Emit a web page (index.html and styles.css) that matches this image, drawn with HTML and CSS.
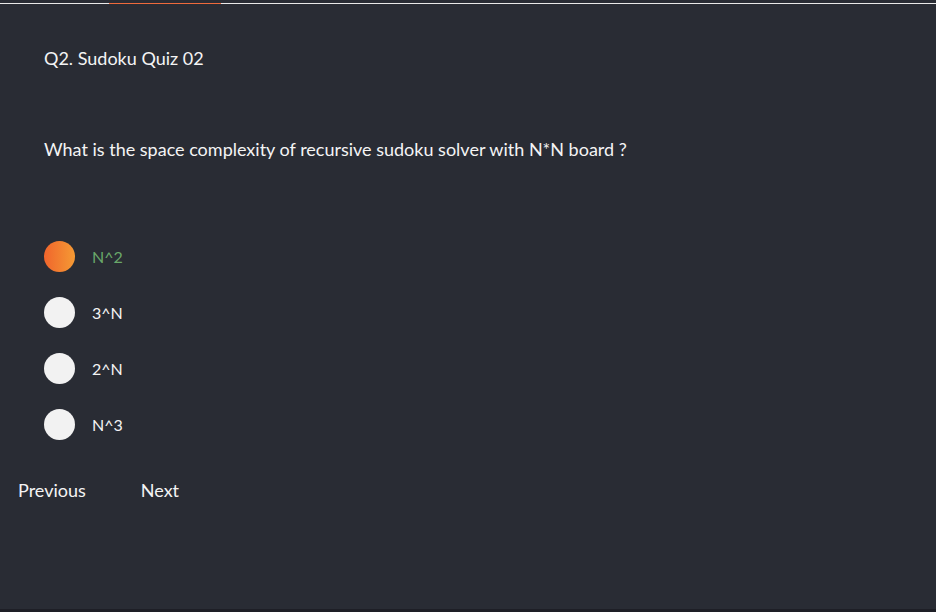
FILE: index.html
```html
<!DOCTYPE html>
<html>
<head>
<meta charset="utf-8">
<link rel="stylesheet" href="styles.css">
</head>
<body>
<div class="page">
  <div class="progress">
    <span class="seg seg-done"></span>
    <span class="seg seg-current"></span>
    <span class="seg seg-rest"></span>
  </div>
  <div class="quiz">
    <h2 class="title">Q2. Sudoku Quiz 02</h2>
    <p class="question">What is the space complexity of recursive sudoku solver with N*N board ?</p>
    <ul class="options">
      <li class="option selected"><span class="radio"></span><span class="label">N^2</span></li>
      <li class="option"><span class="radio"></span><span class="label">3^N</span></li>
      <li class="option"><span class="radio"></span><span class="label">2^N</span></li>
      <li class="option"><span class="radio"></span><span class="label">N^3</span></li>
    </ul>
  </div>
  <div class="nav">
    <button class="nav-btn">Previous</button>
    <button class="nav-btn">Next</button>
  </div>
</div>
</body>
</html>
```
FILE: styles.css
```css
html, body {
  margin: 0;
  padding: 0;
  background: #1e1f26;
}
body {
  font-family: Lato, "Open Sans", sans-serif;
  color: #f4f4f4;
}
.page {
  height: 609px;
  background: #292c34;
  padding-top: 3px;
  box-sizing: border-box;
}
.progress {
  display: flex;
  height: 1px;
}
.seg-done { width: 109px; background: #e9e9e9; }
.seg-current { width: 112px; background: #ee6a3c; }
.seg-rest { flex: 1; background: #e9e9e9; }
.quiz {
  padding: 0 44px;
}
.title {
  margin: 0;
  padding-top: 43px;
  font-size: 18px;
  font-weight: 400;
  line-height: 22px;
}
.question {
  margin: 69px 0 0;
  font-size: 18px;
  line-height: 22px;
}
.options {
  list-style: none;
  margin: 80px 0 0;
  padding: 0;
  display: flex;
  flex-direction: column;
  gap: 24px;
}
.option {
  display: flex;
  align-items: center;
  gap: 17px;
  height: 32px;
  font-size: 16px;
}
.radio {
  width: 31px;
  height: 31px;
  border-radius: 50%;
  background: #f2f2f2;
}
.selected .radio {
  background: linear-gradient(90deg, #f0652c, #f59a34);
}
.selected .label {
  color: #6aa86a;
}
.nav {
  display: flex;
  gap: 55px;
  padding: 39px 18px 0;
}
.nav-btn {
  background: none;
  border: none;
  padding: 0;
  color: #f4f4f4;
  font-family: inherit;
  font-size: 18px;
  line-height: 22px;
}
```
